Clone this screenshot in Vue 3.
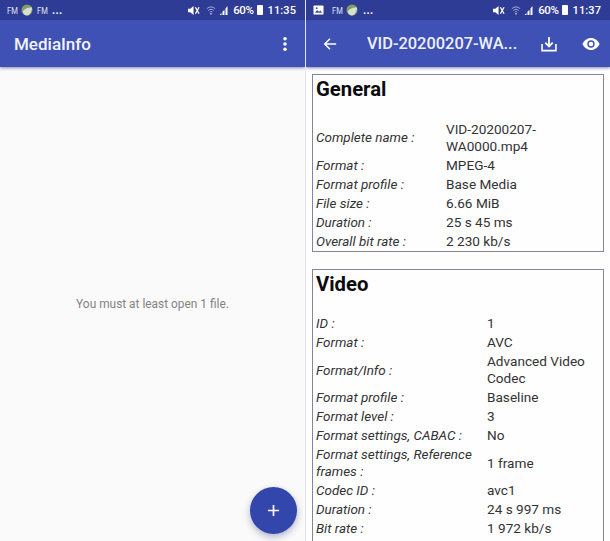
<script setup>
const general = [
  ['Complete name :', 'VID-20200207-WA0000.mp4'],
  ['Format :', 'MPEG-4'],
  ['Format profile :', 'Base Media'],
  ['File size :', '6.66 MiB'],
  ['Duration :', '25 s 45 ms'],
  ['Overall bit rate :', '2 230 kb/s'],
]
const video = [
  ['ID :', '1'],
  ['Format :', 'AVC'],
  ['Format/Info :', 'Advanced Video Codec'],
  ['Format profile :', 'Baseline'],
  ['Format level :', '3'],
  ['Format settings, CABAC :', 'No'],
  ['Format settings, Reference frames :', '1 frame'],
  ['Codec ID :', 'avc1'],
  ['Duration :', '24 s 997 ms'],
  ['Bit rate :', '1 972 kb/s'],
]
</script>

<template>
  <div class="screen">
    <section class="phone left">
      <div class="status">
        <div class="status-left">
          <span class="fm">FM</span>
          <svg class="ball" viewBox="0 0 12 12"><circle cx="6" cy="6" r="5.5" fill="#7f9f6a"/><path d="M1.5 7.5C4 4 8 3 11 3.5 11 8 8 11.5 6 11.5 4 11.5 2.5 10 1.5 7.5Z" fill="#d7e0d0"/></svg>
          <span class="fm">FM</span>
          <span class="dots">...</span>
        </div>
        <div class="status-right">
          <svg class="mute" viewBox="0 0 13 11"><path d="M0 3.5h2.500L6 .5v10L2.500 7.500H0Z" fill="#fff"/><path d="M8 2l4 7M12 2L8 9" stroke="#fff" stroke-width="1.400"/></svg>
          <svg class="wifi" viewBox="0 0 12 11"><path d="M1 3.500C4 .5 8 .5 11 3.500M2.800 5.500C4.800 3.600 7.200 3.600 9.200 5.500M4.500 7.500C5.400 6.700 6.600 6.700 7.500 7.500" fill="none" stroke="#aeb6df" stroke-width="1.100"/><circle cx="6" cy="9.500" r="1" fill="#d5d9f0"/></svg>
          <svg class="signal" viewBox="0 0 10 10"><path d="M0 10 2 8v2ZM3 10V6.500L5 5v5ZM6 10V3.500L8 1v9Z" fill="#fff"/></svg>
          <span class="pct">60%</span>
          <span class="battery"></span>
          <span class="clock">11:35</span>
        </div>
      </div>
      <header class="bar">
        <h1 class="app-title">MediaInfo</h1>
        <svg class="more" viewBox="0 0 6 18"><circle cx="3" cy="3" r="2" fill="#fff"/><circle cx="3" cy="9" r="2" fill="#fff"/><circle cx="3" cy="15" r="2" fill="#fff"/></svg>
      </header>
      <main class="empty"><p>You must at least open 1 file.</p></main>
      <button class="fab" aria-label="Add">
        <svg viewBox="0 0 14 14"><path d="M7 1v12M1 7h12" stroke="#fff" stroke-width="1.800"/></svg>
      </button>
    </section>

    <section class="phone right">
      <div class="status">
        <div class="status-left">
          <svg class="pic" viewBox="0 0 12 11"><rect x=".5" y=".5" width="11" height="10" rx="1" fill="#fff"/><path d="M2 8.500 4.500 5.500 6.500 7.500 8 6l2 2.500Z" fill="#3f4da5"/><circle cx="4" cy="3.500" r="1" fill="#3f4da5"/></svg>
          <span class="fm">FM</span>
          <svg class="ball" viewBox="0 0 12 12"><circle cx="6" cy="6" r="5.500" fill="#7f9f6a"/><path d="M1.500 7.500C4 4 8 3 11 3.500 11 8 8 11.500 6 11.500 4 11.500 2.500 10 1.500 7.500Z" fill="#d7e0d0"/></svg>
          <span class="dots">...</span>
        </div>
        <div class="status-right">
          <svg class="mute" viewBox="0 0 13 11"><path d="M0 3.500h2.500L6 .5v10L2.500 7.500H0Z" fill="#fff"/><path d="M8 2l4 7M12 2L8 9" stroke="#fff" stroke-width="1.400"/></svg>
          <svg class="wifi" viewBox="0 0 12 11"><path d="M1 3.500C4 .5 8 .5 11 3.500M2.800 5.500C4.800 3.600 7.200 3.600 9.200 5.500M4.500 7.500C5.400 6.700 6.600 6.700 7.500 7.500" fill="none" stroke="#aeb6df" stroke-width="1.100"/><circle cx="6" cy="9.500" r="1" fill="#d5d9f0"/></svg>
          <svg class="signal" viewBox="0 0 10 10"><path d="M0 10 2 8v2ZM3 10V6.500L5 5v5ZM6 10V3.500L8 1v9Z" fill="#fff"/></svg>
          <span class="pct">60%</span>
          <span class="battery"></span>
          <span class="clock">11:37</span>
        </div>
      </div>
      <header class="bar bar-detail">
        <svg class="back" viewBox="0 0 16 16"><path d="M15 8H2M8 2 2 8l6 6" fill="none" stroke="#fff" stroke-width="1.700"/></svg>
        <h1 class="file-title">VID-20200207-WA...</h1>
        <svg class="save" viewBox="0 0 18 18"><path d="M1.200 9v7.500h15.600V9" fill="none" stroke="#fff" stroke-width="1.800"/><path d="M9 1v10M4.800 7.500 9 11.700l4.200-4.200" fill="none" stroke="#fff" stroke-width="2"/></svg>
        <svg class="eye" viewBox="0 0 20 14"><path d="M10 0C5.500 0 2 2.800 0 7c2 4.200 5.500 7 10 7s8-2.800 10-7c-2-4.200-5.500-7-10-7Z" fill="#fff"/><circle cx="10" cy="7" r="4.300" fill="#3f51b5"/><circle cx="10" cy="7" r="2.600" fill="#fff"/></svg>
      </header>
      <main class="report">
        <article class="card card-general">
          <h2>General</h2>
          <div v-for="row in general" :key="row[0]" class="row">
            <div class="label">{{ row[0] }}</div>
            <div class="value">{{ row[1] }}</div>
          </div>
        </article>
        <article class="card card-video">
          <h2>Video</h2>
          <div v-for="row in video" :key="row[0]" class="row">
            <div class="label">{{ row[0] }}</div>
            <div class="value">{{ row[1] }}</div>
          </div>
        </article>
      </main>
    </section>
  </div>
</template>

<style>
html, body { margin: 0; overflow: hidden; }
</style>

<style scoped>
.screen {
  width: 610px;
  height: 541px;
  display: flex;
  overflow: hidden;
  background: #e4e4ea;
  font-family: Roboto, "Liberation Sans", sans-serif;
}
.phone {
  position: relative;
  display: flex;
  flex-direction: column;
  height: 541px;
  overflow: hidden;
}
.left { width: 305px; background: #fafafa; }
.right { width: 304px; margin-left: 1px; background: #fefeff; }
.status {
  height: 20px;
  flex: none;
  display: flex;
  align-items: center;
  justify-content: space-between;
  background: #2e3c96;
  color: #fff;
  padding: 0 9px 0 7px;
}
.status-left, .status-right { display: flex; align-items: center; }
.status-left { gap: 4px; }
.status-right { gap: 3px; }
.fm {
  font-size: 9.500px;
  color: #dfe2f3;
  width: 10px;
  white-space: nowrap;
  transform: scaleX(.8);
  transform-origin: left center;
}
.ball { width: 12px; height: 12px; }
.pic { width: 11px; height: 10px; margin-right: 4px; }
.dots { font-size: 11px; font-weight: 700; line-height: 11px; letter-spacing: .3px; margin-left: 1px; }
.mute { width: 12px; height: 11px; margin-right: 3px; }
.wifi { width: 10px; height: 11px; }
.signal { width: 11px; height: 10px; }
.pct { font-size: 11.500px; font-weight: 500; letter-spacing: -.4px; }
.battery {
  width: 6px;
  height: 10px;
  background: #fff;
  border-radius: 1px;
}
.clock { font-size: 11px; font-weight: 500; letter-spacing: .1px; margin-left: 2px; }
.bar {
  height: 47px;
  flex: none;
  display: flex;
  align-items: center;
  justify-content: space-between;
  background: #3f51b5;
  box-shadow: 0 1px 3px rgba(30, 40, 110, .55);
  padding: 0 17px 0 14px;
  position: relative;
  z-index: 1;
}
.app-title {
  margin: 0;
  font-size: 17px;
  font-weight: 500;
  color: #f3f5fc;
}
.more { width: 6px; height: 16px; }
.empty {
  flex: 1;
  display: flex;
  justify-content: center;
  padding-top: 230px;
}
.empty p {
  margin: 0;
  font-size: 11.900px;
  line-height: 15px;
  color: #848484;
}
.fab {
  position: absolute;
  left: 250px;
  top: 487px;
  width: 47px;
  height: 47px;
  border: 0;
  border-radius: 50%;
  padding: 0;
  background: #3346ab;
  box-shadow: 0 3px 7px rgba(40, 50, 120, .35);
  display: flex;
  align-items: center;
  justify-content: center;
}
.fab svg { width: 13px; height: 13px; }
.bar-detail { padding: 0 10px 0 17px; justify-content: flex-start; }
.back { width: 14px; height: 14px; }
.file-title {
  margin: 0 0 0 30px;
  font-size: 16.400px;
  font-weight: 500;
  color: #eef0fb;
  white-space: nowrap;
  flex: 1;
}
.save { width: 16px; height: 16px; margin-right: 25px; }
.eye { width: 18px; height: 12px; }
.report {
  padding: 7px 6px 0 6px;
  display: flex;
  flex-direction: column;
  gap: 17px;
}
.card {
  border: 1px solid #84849c;
  padding: 0 3px 20px 3px;
  flex: none;
}
.card-general { height: 178px; box-sizing: border-box; padding-bottom: 0; }
h2 {
  margin: 0 0 17.500px;
  padding-top: 1px;
  font-size: 20.300px;
  line-height: 26px;
  font-weight: 700;
  color: #0c0c0c;
}
.card-video h2 { margin-bottom: 17px; }
.row {
  display: grid;
  align-items: center;
  padding: 1px 0;
  font-size: 13.450px;
  line-height: 17px;
  color: #333;
}
.card-general .row { grid-template-columns: 130px 1fr; }
.card-general .value { width: 110px; }
.card-video .row { grid-template-columns: 171px 1fr; }
.card-video .label { width: 166px; }
.card-video .value { width: 112px; }
.label { font-style: italic; }
.value { font-size: 13.600px; }
</style>
